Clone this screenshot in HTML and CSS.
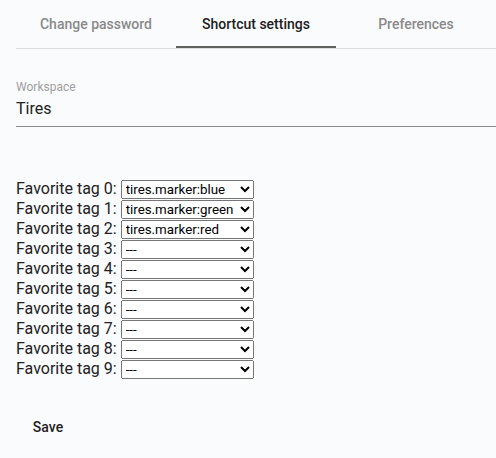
FILE: index.html
```html
<!DOCTYPE html>
<html lang="en">
<head>
    <meta charset="UTF-8">
    <meta name="viewport" content="width=device-width, initial-scale=1.0">
    <title>Settings</title>
    <link rel="stylesheet" href="styles.css">
</head>
<body>
    <div class="tabs">
        <div class="tab">Change password</div>
        <div class="tab active">Shortcut settings</div>
        <div class="tab">Preferences</div>
    </div>
    <div class="field">
        <label class="field-label">Workspace</label>
        <div class="field-value">Tires</div>
    </div>
    <div class="tags">
        <div class="tag-row">Favorite tag 0: <select><option>tires.marker:blue</option><option>---</option></select></div>
        <div class="tag-row">Favorite tag 1: <select><option>tires.marker:green</option><option>---</option></select></div>
        <div class="tag-row">Favorite tag 2: <select><option>tires.marker:red</option><option>---</option></select></div>
        <div class="tag-row">Favorite tag 3: <select><option>---</option></select></div>
        <div class="tag-row">Favorite tag 4: <select><option>---</option></select></div>
        <div class="tag-row">Favorite tag 5: <select><option>---</option></select></div>
        <div class="tag-row">Favorite tag 6: <select><option>---</option></select></div>
        <div class="tag-row">Favorite tag 7: <select><option>---</option></select></div>
        <div class="tag-row">Favorite tag 8: <select><option>---</option></select></div>
        <div class="tag-row">Favorite tag 9: <select><option>---</option></select></div>
    </div>
    <button class="save">Save</button>
</body>
</html>
```

FILE: styles.css
```css
body{
    margin: 0;
    padding: 0 0 0 16px;
    background-color: #fafbfd;
    font-family: Roboto, "Liberation Sans", sans-serif;
    color: #212121;
}

.tabs{
    display: flex;
    height: 48px;
    border-bottom: 1px solid #dcdcdc;
}

.tab{
    position: relative;
    width: 160px;
    display: flex;
    align-items: center;
    justify-content: center;
    font-size: 14px;
    font-weight: 500;
    color: #8a8a8a;
}

.tab.active{
    color: #212121;
}

.tab.active::after{
    content: "";
    position: absolute;
    left: 0;
    right: 0;
    bottom: 0;
    height: 2px;
    background-color: #616161;
}

.field{
    margin-top: 31px;
    border-bottom: 1px solid #8a8a8a;
    padding-bottom: 5px;
}

.field-label{
    display: block;
    font-size: 12px;
    color: #9e9e9e;
    line-height: 14px;
}

.field-value{
    font-size: 16px;
    line-height: 24px;
    margin-top: 3px;
}

.tags{
    margin-top: 52px;
}

.tag-row{
    font-size: 16px;
    line-height: 20px;
    height: 20px;
}

select{
    font-family: Roboto, "Liberation Sans", sans-serif;
    font-size: 13.33px;
    width: 133px;
    height: 19px;
    vertical-align: top;
    margin: 1px 0 0 0;
}

.save{
    margin-top: 30px;
    min-width: 64px;
    height: 36px;
    padding: 0 16px;
    border: none;
    background: none;
    font-family: Roboto, "Liberation Sans", sans-serif;
    font-size: 14px;
    font-weight: 500;
    color: #212121;
}
```
